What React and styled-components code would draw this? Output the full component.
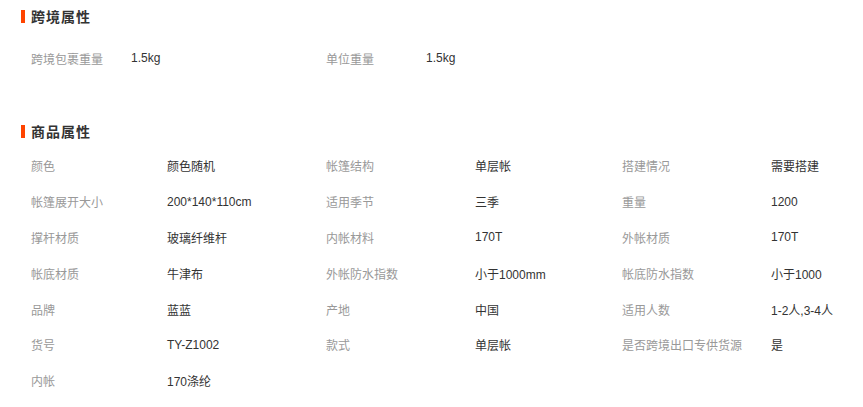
import React from 'react'
import styled, { createGlobalStyle } from 'styled-components'

const GlobalStyle = createGlobalStyle`
  body {
    margin: 0;
    background: #fff;
    font-family: "Liberation Sans", "Noto Sans CJK SC", sans-serif;
    font-size: 12px;
  }
`

const Page = styled.div`
  width: 863px;
  padding-left: 21px;
  box-sizing: border-box;
`

const Title = styled.h3`
  display: flex;
  align-items: center;
  height: 32px;
  margin: ${p => p.$top || 0}px 0 0;
  font-size: 14px;
  font-weight: bold;
  color: #333;
  letter-spacing: 1px;

  &::before {
    content: '';
    width: 4px;
    height: 13px;
    margin-right: 6px;
    background: #ff4400;
  }
`

const Grid = styled.div`
  display: grid;
  grid-template-columns: ${p => p.$cols};
  grid-auto-rows: ${p => p.$row || 36}px;
  align-items: center;
  padding-left: 10px;
  margin-top: ${p => p.$top || 0}px;
`

const Label = styled.span`
  color: #999;
`

const Value = styled.span`
  color: #333;
`

const cross = [
  ['跨境包裹重量', '1.5kg'],
  ['单位重量', '1.5kg'],
]

const attrs = [
  ['颜色', '颜色随机'],
  ['帐篷结构', '单层帐'],
  ['搭建情况', '需要搭建'],
  ['帐篷展开大小', '200*140*110cm'],
  ['适用季节', '三季'],
  ['重量', '1200'],
  ['撑杆材质', '玻璃纤维杆'],
  ['内帐材料', '170T'],
  ['外帐材质', '170T'],
  ['帐底材质', '牛津布'],
  ['外帐防水指数', '小于1000mm'],
  ['帐底防水指数', '小于1000'],
  ['品牌', '蓝蓝'],
  ['产地', '中国'],
  ['适用人数', '1-2人,3-4人'],
  ['货号', 'TY-Z1002'],
  ['款式', '单层帐'],
  ['是否跨境出口专供货源', '是'],
  ['内帐', '170涤纶'],
]

const Pairs = ({ items }) =>
  items.map(([k, v]) => (
    <React.Fragment key={k}>
      <Label>{k}</Label>
      <Value>{v}</Value>
    </React.Fragment>
  ))

export default function App() {
  return (
    <Page>
      <GlobalStyle />
      <Title>跨境属性</Title>
      <Grid $cols="100px 195px 100px 1fr" $top={8}>
        <Pairs items={cross} />
      </Grid>
      <Title $top={39}>商品属性</Title>
      <Grid $cols="136px 159px 149px 147px 149px 1fr" $row={35.8} $top={1}>
        <Pairs items={attrs} />
      </Grid>
    </Page>
  )
}
